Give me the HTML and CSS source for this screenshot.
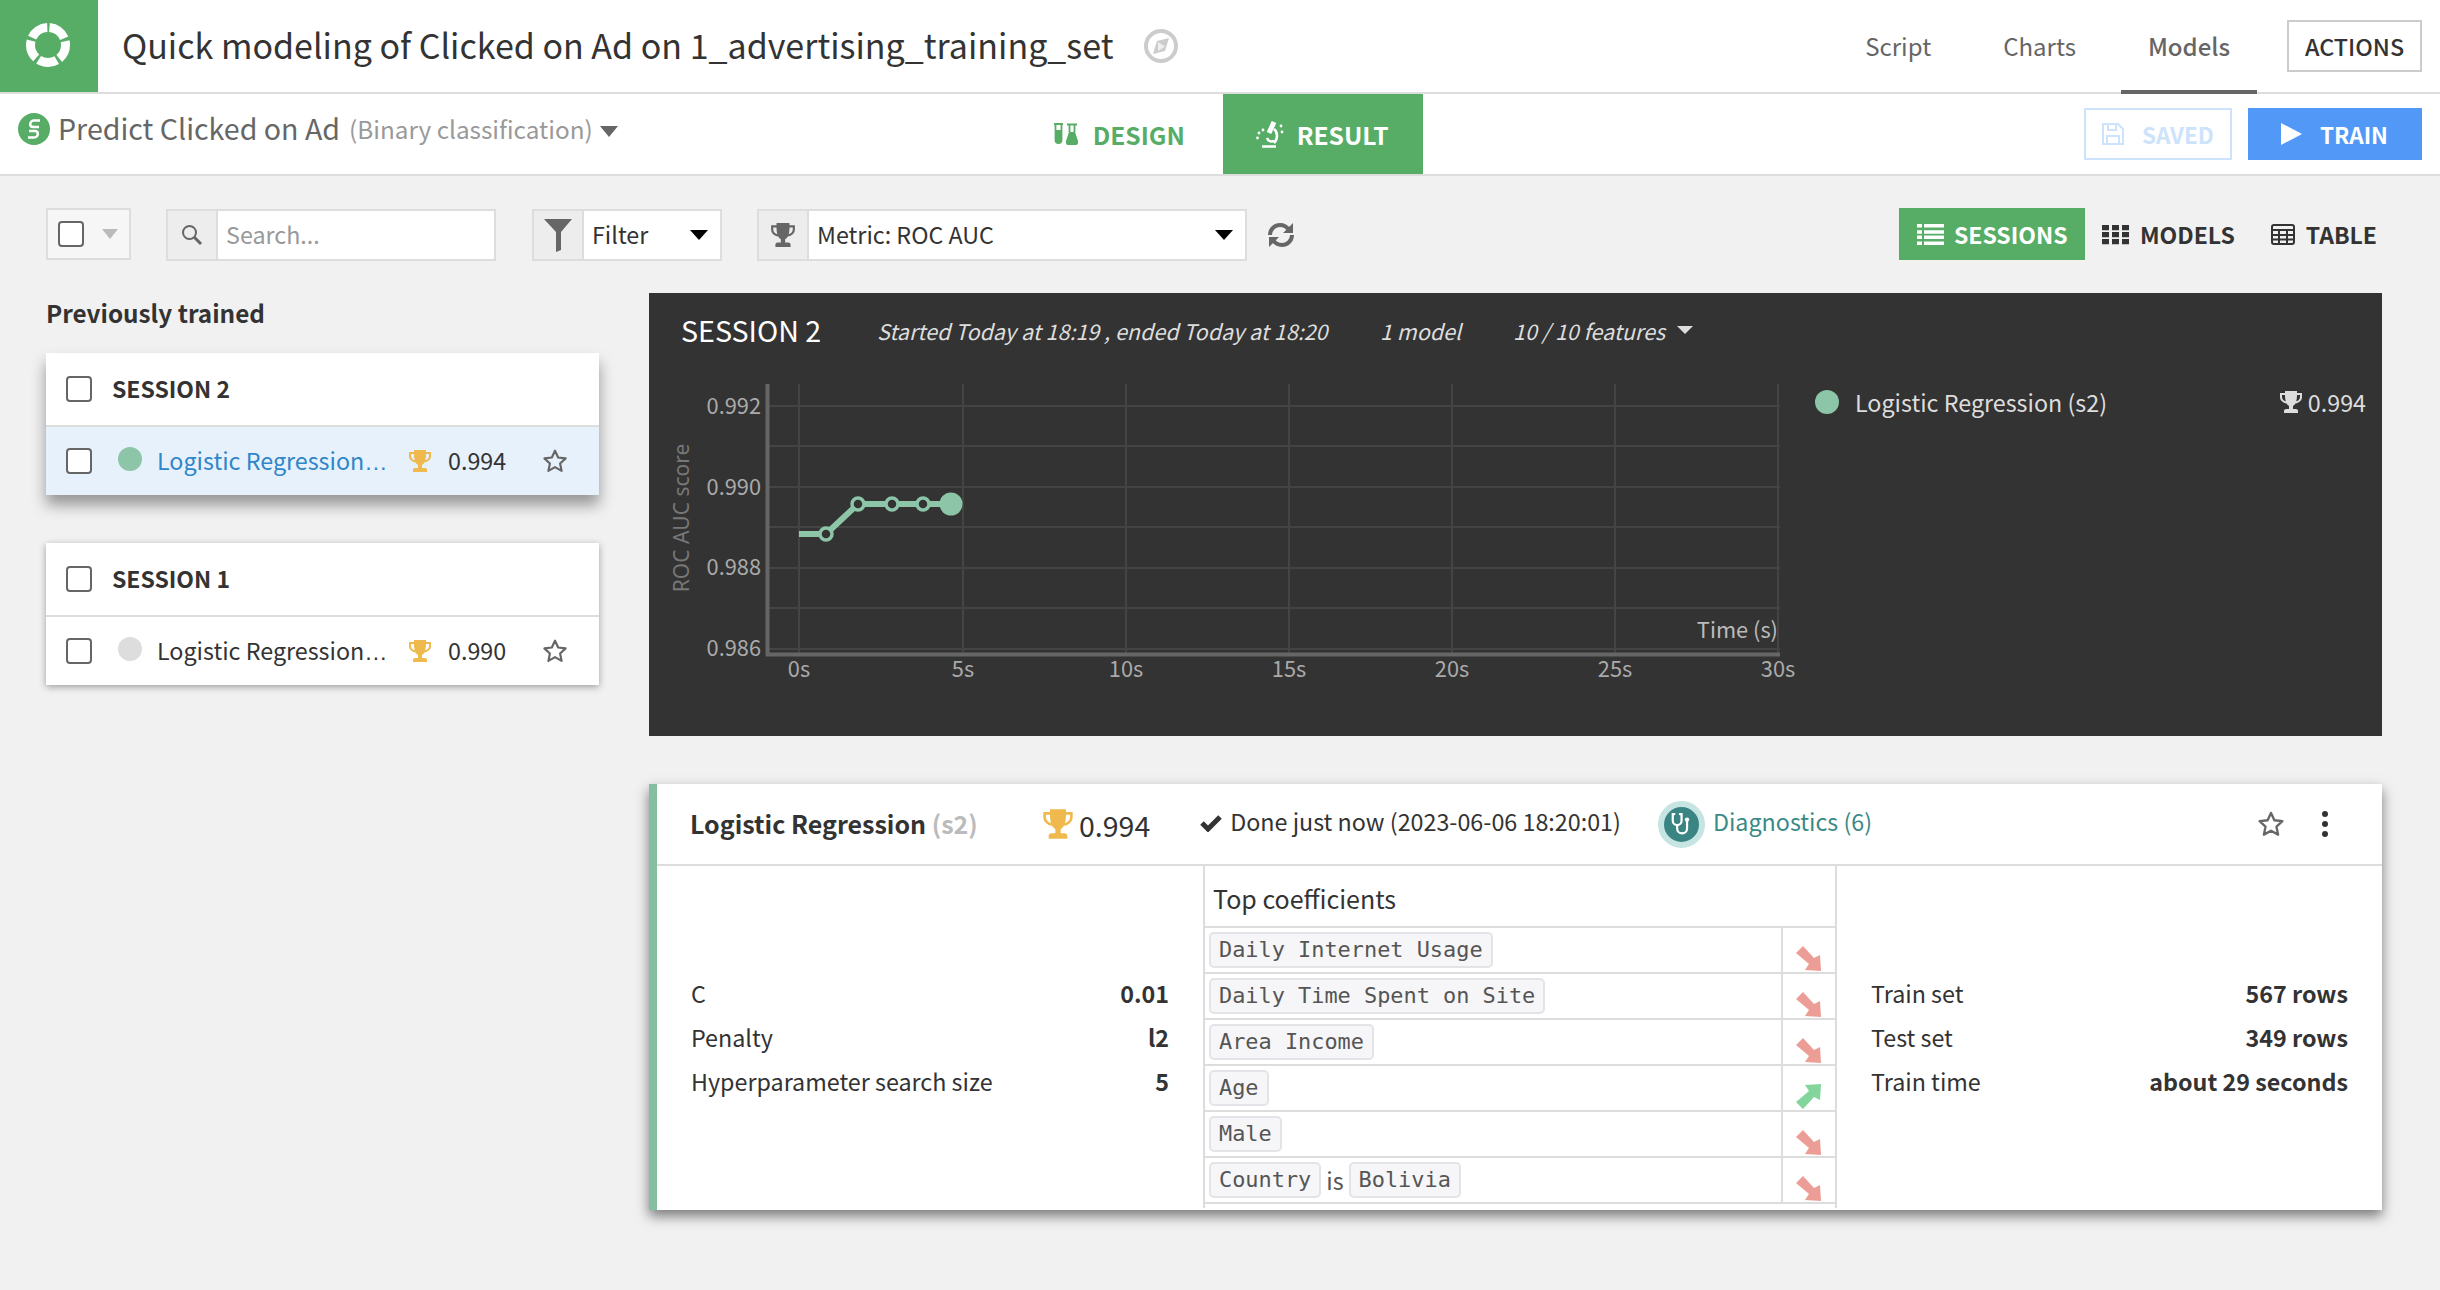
FILE: index.html
```html
<!DOCTYPE html>
<html lang="en">
<head>
    <meta charset="UTF-8">
    <title>Quick modeling</title>
    <link rel="stylesheet" href="styles.css">
</head>
<body>
    <svg class="defs" width="0" height="0">
        <symbol id="trophy" viewBox="0 0 24 24">
            <path fill="currentColor" d="M6 1h12v2h5v4c0 3.500-3 6-6.600 6.400-.7 1.300-1.600 2.100-2.400 2.500V19h3c1 0 2 .8 2 2v2H5v-2c0-1.200 1-2 2-2h3v-3.100c-.8-.4-1.700-1.200-2.400-2.500C4 13 1 10.500 1 7V3h5V1zM3 5v2c0 2 1.500 3.700 3.800 4.300C6.300 9.700 6 7.600 6 5H3zm18 0h-3c0 2.600-.3 4.700-.8 6.300C19.500 10.700 21 9 21 7V5z"/>
        </symbol>
        <symbol id="star" viewBox="0 0 24 24">
            <path fill="none" stroke="currentColor" stroke-width="2" stroke-linejoin="round" d="M12 2.500l2.900 6.300 6.900.8-5.100 4.700 1.400 6.800-6.100-3.400-6.100 3.400 1.400-6.800-5.100-4.700 6.900-.8z"/>
        </symbol>
        <symbol id="down" viewBox="0 0 25 25">
            <path fill="currentColor" d="M0 7l7-7 11 12 6-3 1 16-16-1 4-6z"/>
        </symbol>
        <symbol id="up" viewBox="0 0 25 25">
            <path fill="currentColor" d="M0 18l7 7 11-12 6 3 1-16-16 1 4 6z"/>
        </symbol>
    </svg>

    <header class="topbar">
        <div class="logo">
            <svg width="48" height="48" viewBox="0 0 48 48"><circle cx="24" cy="24" r="17.500" fill="none" stroke="#fff" stroke-width="9" stroke-dasharray="19 3" stroke-dashoffset="-1.500" transform="rotate(-90 24 24)"/></svg>
        </div>
        <h1 class="page-title">Quick modeling of Clicked on Ad on 1_advertising_training_set</h1>
        <svg class="compass" width="34" height="34" viewBox="0 0 34 34"><circle cx="17" cy="17" r="15" fill="none" stroke="#ccc" stroke-width="4"/><path fill="#ccc" d="M25 9l-4 13-12 3 4-13z"/><path fill="#eee" d="M14 13l7 4.500-7 4.500z"/></svg>
        <nav class="topnav">
            <a>Script</a>
            <a>Charts</a>
            <a class="active">Models</a>
        </nav>
        <button class="actions-btn">ACTIONS</button>
    </header>

    <div class="subbar">
        <svg class="task-icon" width="32" height="32" viewBox="0 0 32 32"><circle cx="16" cy="16" r="16" fill="#58ad66"/><path fill="none" stroke="#fff" stroke-width="2.500" d="M22 7.500h-6a3.800 3.800 0 0 0-3.800 3.800c0 1.800 1.300 2.700 3 2.700H21M10 24.500h6a3.800 3.800 0 0 0 3.800-3.800c0-1.800-1.300-2.700-3-2.700H11"/></svg>
        <div class="task-title">Predict Clicked on Ad</div>
        <div class="task-kind">(Binary classification)</div>
        <span class="caret task-caret"></span>
        <div class="mode-tabs">
            <a class="mode-tab">
                <svg width="24" height="22" viewBox="0 0 24 22"><path fill="none" stroke="currentColor" stroke-width="1.800" d="M0 1h9M1.500 1v16a3 3 0 0 0 6 0V1M13 1.500h10M15.500 1.500V9M20.500 1.500V9"/><path fill="currentColor" d="M1.500 7h6v10a3 3 0 0 1-6 0zM15 9h6l3 9c.6 2-.4 4-2 4h-8c-1.600 0-2.600-2-2-4z"/></svg>
                DESIGN
            </a>
            <a class="mode-tab active">
                <svg width="28" height="27" viewBox="0 0 28 27"><path fill="none" stroke="#fff" stroke-width="5" d="M18 1l-5 11"/><path fill="none" stroke="#fff" stroke-width="2.500" d="M18 8c4 3 4 10 0 14M6 25.500h14M11 17c1 3 4 4 7 3"/><circle cx="3" cy="12" r="1.400" fill="#fff"/><circle cx="7" cy="9" r="1.400" fill="#fff"/><circle cx="1.500" cy="17" r="1.400" fill="#fff"/><circle cx="25" cy="5" r="1.400" fill="#fff"/><circle cx="26" cy="11" r="1.400" fill="#fff"/></svg>
                RESULT
            </a>
        </div>
        <div class="subbar-actions">
            <button class="saved-btn">
                <svg width="22" height="22" viewBox="0 0 22 22"><path fill="none" stroke="currentColor" stroke-width="2" d="M1 1h15l5 5v15H1zM6 1v6h8V1M5 21v-8h12v8"/></svg>
                SAVED
            </button>
            <button class="train-btn">
                <svg width="21" height="22" viewBox="0 0 21 22"><path fill="#fff" d="M0 0l21 11L0 22z"/></svg>
                TRAIN
            </button>
        </div>
    </div>

    <div class="toolbar">
        <div class="select-all"><span class="checkbox small"></span><span class="caret pale"></span></div>
        <div class="field search-field">
            <span class="addon"><svg width="22" height="22" viewBox="0 0 22 22"><circle cx="8.500" cy="8.500" r="6.500" fill="none" stroke="#666" stroke-width="2"/><path stroke="#666" stroke-width="3" d="M13 13l7 7"/></svg></span>
            <span class="placeholder">Search...</span>
        </div>
        <div class="field filter-field">
            <span class="addon"><svg width="30" height="34" viewBox="0 0 30 34"><path fill="#666" d="M1 1h28L18 14v18l-5 2V14z"/></svg></span>
            <span class="field-value">Filter</span>
            <span class="caret"></span>
        </div>
        <div class="field metric-field">
            <span class="addon"><svg class="icon-grey" width="26" height="26"><use href="#trophy"/></svg></span>
            <span class="field-value">Metric: ROC AUC</span>
            <span class="caret"></span>
        </div>
        <svg class="refresh" width="28" height="26" viewBox="0 0 28 26"><path fill="none" stroke="#666" stroke-width="4" d="M3 13c0-6 5-10 10-10 4 0 7 2 9 5M25 13c0 6-5 10-10 10-4 0-7-2-9-5"/><path fill="#666" d="M26 1v10H16zM2 25V15h10z"/></svg>
        <div class="view-tabs">
            <a class="view-tab active">
                <svg width="27" height="21" viewBox="0 0 27 24" preserveAspectRatio="none"><path fill="#fff" d="M0 0h5v4H0zM7 0h20v4H7zM0 7h5v4H0zM7 7h20v4H7zM0 13h5v4H0zM7 13h20v4H7zM0 20h5v4H0zM7 20h20v4H7z"/></svg>
                SESSIONS
            </a>
            <a class="view-tab">
                <svg width="27" height="21" viewBox="0 0 27 24" preserveAspectRatio="none"><path fill="#333" d="M0 1h7v6H0zM10 1h7v6h-7zM20 1h7v6h-7zM0 9h7v6H0zM10 9h7v6h-7zM20 9h7v6h-7zM0 17h7v6H0zM10 17h7v6h-7zM20 17h7v6h-7z"/></svg>
                MODELS
            </a>
            <a class="view-tab">
                <svg width="24" height="21" viewBox="0 0 24 21"><rect x="1" y="1" width="22" height="19" rx="2" fill="none" stroke="#333" stroke-width="2"/><path stroke="#333" stroke-width="2" d="M1 6h22M1 11h22M1 15.500h22M8 6v14M16 6v14"/></svg>
                TABLE
            </a>
        </div>
    </div>

    <div class="content">
        <aside class="sidebar">
            <h2 class="side-title">Previously trained</h2>
            <section class="session-card selected">
                <div class="session-head"><span class="checkbox"></span><span class="session-name">SESSION 2</span></div>
                <div class="session-row">
                    <span class="checkbox"></span>
                    <span class="dot green"></span>
                    <span class="model-name">Logistic Regression<span class="ell">…</span></span>
                    <svg class="icon-gold" width="24" height="24"><use href="#trophy"/></svg>
                    <span class="score">0.994</span>
                    <svg class="icon-star" width="26" height="26"><use href="#star"/></svg>
                </div>
            </section>
            <section class="session-card">
                <div class="session-head"><span class="checkbox"></span><span class="session-name">SESSION 1</span></div>
                <div class="session-row">
                    <span class="checkbox"></span>
                    <span class="dot grey"></span>
                    <span class="model-name">Logistic Regression<span class="ell">…</span></span>
                    <svg class="icon-gold" width="24" height="24"><use href="#trophy"/></svg>
                    <span class="score">0.990</span>
                    <svg class="icon-star" width="26" height="26"><use href="#star"/></svg>
                </div>
            </section>
        </aside>

        <main class="results">
            <section class="chart-panel">
                <div class="chart-head">
                    <span class="chart-title">SESSION 2</span>
                    <em class="chart-times">Started Today at 18:19 , ended Today at 18:20</em>
                    <em class="chart-count">1 model</em>
                    <em class="chart-features">10 / 10 features</em>
                    <span class="caret light"></span>
                </div>
                <div class="chart-body">
                    <svg class="chart" width="1180" height="320" viewBox="649 380 1180 320">
                        <g class="grid">
                            <path d="M769 406H1780M769 446H1780M769 487H1780M769 527H1780M769 568H1780M769 608H1780M769 649H1780"/>
                            <path d="M799 384V656M963 384V656M1126 384V656M1289 384V656M1452 384V656M1615 384V656M1778 384V656"/>
                        </g>
                        <path class="axis" d="M767.500 384V654.500H1780" />
                        <g class="tick-y">
                            <text x="761" y="414">0.992</text>
                            <text x="761" y="495">0.990</text>
                            <text x="761" y="575">0.988</text>
                            <text x="761" y="656">0.986</text>
                        </g>
                        <g class="tick-x">
                            <text x="799" y="677">0s</text>
                            <text x="963" y="677">5s</text>
                            <text x="1126" y="677">10s</text>
                            <text x="1289" y="677">15s</text>
                            <text x="1452" y="677">20s</text>
                            <text x="1615" y="677">25s</text>
                            <text x="1778" y="677">30s</text>
                        </g>
                        <text class="time-label" x="1778" y="638">Time (s)</text>
                        <text class="y-label" transform="translate(689 518) rotate(-90)">ROC AUC score</text>
                        <path class="series" d="M799 534H826L858 504H951"/>
                        <circle class="pt" cx="826" cy="534" r="6"/>
                        <circle class="pt" cx="858" cy="504" r="6"/>
                        <circle class="pt" cx="892" cy="504" r="6"/>
                        <circle class="pt" cx="923" cy="504" r="6"/>
                        <circle class="pt-end" cx="951" cy="504" r="11.500"/>
                    </svg>
                    <div class="legend">
                        <span class="dot green"></span>
                        <span class="legend-name">Logistic Regression (s2)</span>
                        <svg class="icon-light" width="24" height="24"><use href="#trophy"/></svg>
                        <span class="legend-score">0.994</span>
                    </div>
                </div>
            </section>

            <section class="model-card">
                <div class="model-head">
                    <span class="model-title">Logistic Regression <span class="muted">(s2)</span></span>
                    <svg class="icon-gold head-trophy" width="32" height="32"><use href="#trophy"/></svg>
                    <span class="head-score">0.994</span>
                    <svg class="head-check" width="22" height="18" viewBox="0 0 22 18"><path fill="none" stroke="#333" stroke-width="5" d="M2 9l6 6L20 3"/></svg>
                    <span class="head-status">Done just now (2023-06-06 18:20:01)</span>
                    <span class="diag-icon"><svg width="22" height="22" viewBox="0 0 20 20"><path fill="none" stroke="#fff" stroke-width="2" stroke-linecap="round" d="M4 1H2.500v6a4 4 0 0 0 8 0V1H9M6.500 11v3a4.500 4.500 0 0 0 9 0V8"/><circle cx="15.500" cy="6" r="2" fill="#fff"/></svg></span>
                    <span class="diag-text">Diagnostics (6)</span>
                    <svg class="icon-star head-star" width="28" height="28"><use href="#star"/></svg>
                    <span class="kebab"><i></i><i></i><i></i></span>
                </div>
                <div class="model-body">
                    <div class="param-col">
                        <div class="param"><span>C</span><b>0.01</b></div>
                        <div class="param"><span>Penalty</span><b>l2</b></div>
                        <div class="param"><span>Hyperparameter search size</span><b>5</b></div>
                    </div>
                    <div class="coef-col">
                        <div class="coef-title">Top coefficients</div>
                        <div class="coef-row"><div class="coef-name"><code>Daily Internet Usage</code></div><div class="coef-arrow neg"><svg width="25" height="25"><use href="#down"/></svg></div></div>
                        <div class="coef-row"><div class="coef-name"><code>Daily Time Spent on Site</code></div><div class="coef-arrow neg"><svg width="25" height="25"><use href="#down"/></svg></div></div>
                        <div class="coef-row"><div class="coef-name"><code>Area Income</code></div><div class="coef-arrow neg"><svg width="25" height="25"><use href="#down"/></svg></div></div>
                        <div class="coef-row"><div class="coef-name"><code>Age</code></div><div class="coef-arrow pos"><svg width="25" height="25"><use href="#up"/></svg></div></div>
                        <div class="coef-row"><div class="coef-name"><code>Male</code></div><div class="coef-arrow neg"><svg width="25" height="25"><use href="#down"/></svg></div></div>
                        <div class="coef-row"><div class="coef-name"><code>Country</code> is <code>Bolivia</code></div><div class="coef-arrow neg"><svg width="25" height="25"><use href="#down"/></svg></div></div>
                    </div>
                    <div class="param-col train-col">
                        <div class="param"><span>Train set</span><b>567 rows</b></div>
                        <div class="param"><span>Test set</span><b>349 rows</b></div>
                        <div class="param"><span>Train time</span><b>about 29 seconds</b></div>
                    </div>
                </div>
            </section>
        </main>
    </div>
</body>
</html>
```
FILE: styles.css
```css
* {
    box-sizing: border-box;
}
body {
    margin: 0;
    height: 1290px;
    overflow: hidden;
    background: #f1f1f1;
    color: #333;
    font-family: "Noto Sans CJK SC", "Source Sans Pro", "Open Sans", sans-serif;
    font-size: 23.300px;
}
button {
    font-family: inherit;
}
a {
    cursor: pointer;
}
svg {
    flex: none;
}
.defs {
    display: block;
    height: 0;
}
.caret {
    width: 0;
    height: 0;
    border-left: 9px solid transparent;
    border-right: 9px solid transparent;
    border-top: 10px solid #000;
}
.caret.pale {
    border-left-width: 8px;
    border-right-width: 8px;
    border-top-color: #bbb;
}
.caret.light {
    border-left-width: 8px;
    border-right-width: 8px;
    border-top-width: 8px;
    border-top-color: #ddd;
}
.checkbox {
    display: block;
    flex: none;
    width: 26px;
    height: 26px;
    background: #fff;
    border: 2px solid #666;
    border-radius: 4px;
}

/* top bar */
.topbar {
    display: flex;
    align-items: center;
    height: 94px;
    background: #fff;
    border-bottom: 2px solid #ddd;
}
.logo {
    display: flex;
    align-items: center;
    justify-content: center;
    width: 98px;
    height: 92px;
    padding: 0 2px 2px 0;
    background: #58ad66;
}
.page-title {
    margin: 0 0 0 24px;
    padding-bottom: 2px;
    font-size: 34px;
    font-weight: 400;
    line-height: 90px;
    color: #333;
    white-space: nowrap;
}
.compass {
    margin-left: 30px;
}
.topnav {
    display: flex;
    align-self: stretch;
    margin-left: auto;
    margin-right: 30px;
}
.topnav a {
    display: flex;
    align-items: center;
    height: 94px;
    margin-bottom: -2px;
    margin-left: 18px;
    padding: 0 27px;
    font-size: 24px;
    color: #666;
    border-bottom: 4px solid transparent;
}
.topnav a.active {
    border-bottom-color: #666;
    font-weight: 500;
}
.actions-btn {
    width: 135px;
    height: 52px;
    margin-right: 18px;
    background: #fff;
    border: 2px solid #ccc;
    color: #333;
    font-size: 23.300px;
    font-weight: 500;
}

/* second bar */
.subbar {
    display: flex;
    align-items: center;
    height: 82px;
    padding: 0 18px;
    background: #fff;
    border-bottom: 2px solid #ddd;
}
.task-icon {
    margin-top: -10px;
}
.task-title {
    margin: -14px 0 0 8px;
    font-size: 28.600px;
    color: #666;
}
.task-kind {
    margin: -12px 0 0 9px;
    font-size: 24.300px;
    color: #999;
}
.task-caret {
    margin: -6px 0 0 7px;
    border-top-color: #666;
    border-top-width: 11px;
}
.mode-tabs {
    display: flex;
    margin-left: 436px;
    align-self: stretch;
}
.mode-tab {
    display: flex;
    align-items: center;
    gap: 15px;
    width: 200px;
    height: 80px;
    padding-left: 33px;
    font-size: 24.600px;
    font-weight: 600;
    color: #58ad66;
}
.mode-tab:first-child {
    width: 169px;
    padding-left: 0;
}
.mode-tab.active {
    background: #58ad66;
    color: #fff;
    gap: 13px;
}
.subbar-actions {
    display: flex;
    gap: 16px;
    margin-left: auto;
}
.saved-btn,
.train-btn {
    display: flex;
    align-items: center;
    gap: 18px;
    height: 52px;
    font-size: 22.500px;
    font-weight: 600;
}
.saved-btn {
    width: 148px;
    padding: 0 16px;
    background: #fff;
    border: 2px solid #cde3fb;
    color: #cde3fb;
}
.train-btn {
    width: 174px;
    padding: 0 33px;
    background: #5299f7;
    border: 0;
    color: #fff;
}

/* toolbar */
.toolbar {
    display: flex;
    align-items: center;
    height: 52px;
    margin: 33px 18px 0 46px;
}
.select-all {
    display: flex;
    align-items: center;
    gap: 18px;
    width: 85px;
    height: 52px;
    margin-bottom: 2px;
    padding-left: 10px;
    background: #f6f6f6;
    border: 2px solid #ddd;
}
.field {
    display: flex;
    align-items: center;
    height: 52px;
    background: #fff;
    border: 2px solid #ddd;
}
.addon {
    display: flex;
    flex: none;
    align-items: center;
    justify-content: center;
    width: 50px;
    height: 100%;
    background: #ededed;
    border-right: 2px solid #ddd;
}
.search-field {
    width: 330px;
    margin-left: 35px;
}
.placeholder,
.field-value {
    padding: 0 0 2px 8px;
    line-height: 46px;
}
.placeholder {
    color: #999;
}
.filter-field {
    width: 190px;
    margin-left: 36px;
}
.metric-field {
    width: 490px;
    margin-left: 35px;
}
.field .caret {
    margin-left: auto;
    margin-right: 12px;
}
.icon-grey {
    color: #666;
}
.refresh {
    margin-left: 20px;
}
.view-tabs {
    display: flex;
    margin-left: auto;
    margin-right: 38px;
    margin-bottom: 2px;
}
.view-tab {
    display: flex;
    align-items: center;
    gap: 11px;
    height: 52px;
    padding: 0 17px;
    font-size: 23px;
    font-weight: 600;
    color: #333;
}
.view-tab.active {
    width: 186px;
    gap: 10px;
    padding: 0 0 0 18px;
    background: #58ad66;
    color: #fff;
}
.view-tab:last-child {
    padding: 0 7px 0 19px;
}

/* main area */
.content {
    display: flex;
    gap: 50px;
    margin: 32px 58px 0 46px;
}
.sidebar {
    flex: none;
    width: 553px;
}
.side-title {
    margin: 0 0 20px;
    font-size: 24.300px;
    font-weight: 600;
    line-height: 40px;
    color: #333;
}
.session-card {
    margin-bottom: 48px;
    background: #fff;
    box-shadow: 0 2px 7px rgba(0, 0, 0, 0.35);
}
.session-card.selected {
    box-shadow: 0 10px 14px rgba(0, 0, 0, 0.38);
}
.session-head {
    display: flex;
    align-items: center;
    gap: 20px;
    height: 74px;
    padding-left: 20px;
    border-bottom: 2px solid #ddd;
    font-size: 23px;
    font-weight: 600;
}
.session-name {
    margin-top: -2px;
}
.session-row {
    display: flex;
    align-items: center;
    height: 68px;
    padding-left: 20px;
}
.selected .session-row {
    background: #e7f1fb;
}
.selected .model-name {
    color: #2f86c9;
}
.dot {
    display: block;
    flex: none;
    width: 24px;
    height: 24px;
    border-radius: 50%;
}
.dot.green {
    background: #8cc5a8;
}
.dot.grey {
    background: #ddd;
}
.session-row .dot {
    margin: -4px 15px 0 26px;
}
.model-name {
    width: 233px;
    margin-top: -2px;
    white-space: nowrap;
}
.ell {
    font-family: "Liberation Sans", sans-serif;
}
.icon-gold {
    color: #f0b94d;
}
.session-row .icon-gold {
    margin-left: 18px;
}
.score {
    margin: -2px 0 0 16px;
}
.icon-star {
    color: #666;
}
.session-row .icon-star {
    margin-left: 36px;
}

/* chart panel */
.results {
    flex: 1;
    min-width: 0;
}
.chart-panel {
    height: 443px;
    background: #333;
    color: #ddd;
}
.chart-head {
    display: flex;
    align-items: center;
    height: 74px;
    padding-left: 32px;
}
.chart-head em {
    font-size: 21.500px;
    white-space: nowrap;
}
.chart-title {
    width: 196px;
    margin-top: -2px;
    font-size: 28.600px;
    color: #fff;
}
.chart-times {
    width: 503px;
}
.chart-count {
    width: 133px;
}
.chart-features {
    width: 164px;
}
.chart-body {
    display: flex;
    height: 320px;
    margin-top: 13px;
}
.chart {
    flex: none;
}
.grid path {
    fill: none;
    stroke: #444;
    stroke-width: 2;
}
.axis {
    fill: none;
    stroke: #666;
    stroke-width: 4;
}
.chart text {
    fill: #aaa;
    font-size: 21.800px;
}
.tick-y text {
    text-anchor: end;
}
.tick-x text {
    text-anchor: middle;
}
.chart .time-label {
    text-anchor: end;
    fill: #bbb;
}
.chart .y-label {
    text-anchor: middle;
    fill: #777;
    font-family: "Noto Sans", sans-serif;
    font-size: 21px;
}
.series {
    fill: none;
    stroke: #8cc5a8;
    stroke-width: 6;
}
.pt {
    fill: #333;
    stroke: #8cc5a8;
    stroke-width: 3.500;
}
.pt-end {
    fill: #8cc5a8;
}
.legend {
    display: flex;
    flex: 1;
    align-items: center;
    align-self: flex-start;
    margin-top: 5px;
    padding-right: 16px;
}
.legend .dot {
    margin-left: -14px;
}
.legend-name {
    margin-left: 16px;
}
.icon-light {
    margin-left: auto;
    color: #ddd;
}
.legend-score {
    margin-left: 5px;
}

/* model card */
.model-card {
    height: 426px;
    margin-top: 48px;
    overflow: hidden;
    background: #fff;
    border-left: 8px solid #83bfa0;
    box-shadow: 0 6px 12px rgba(0, 0, 0, 0.5);
}
.model-head {
    display: flex;
    align-items: center;
    height: 82px;
    padding-left: 33px;
    border-bottom: 2px solid #ddd;
}
.model-title {
    width: 352px;
    margin-top: -2px;
    font-size: 25px;
    font-weight: 600;
}
.muted {
    color: #bbb;
}
.head-score {
    margin-left: 5px;
    font-size: 28.500px;
}
.head-check {
    margin: -3px 0 0 50px;
}
.head-status {
    margin: -6px 0 0 8px;
}
.diag-icon {
    display: flex;
    align-items: center;
    justify-content: center;
    width: 47px;
    height: 47px;
    margin-left: 37px;
    background: #3a8583;
    border: 6px solid #c5e4e2;
    border-radius: 50%;
}
.diag-text {
    margin: -6px 0 0 8px;
    color: #3a8a86;
}
.head-star {
    margin-left: auto;
}
.kebab {
    display: flex;
    flex-direction: column;
    gap: 4px;
    margin: 0 54px 0 37px;
}
.kebab i {
    display: block;
    width: 6px;
    height: 6px;
    background: #333;
    border-radius: 50%;
}
.model-body {
    display: flex;
    height: 342px;
}
.param-col {
    display: flex;
    flex: none;
    flex-direction: column;
    justify-content: center;
    gap: 6px;
    width: 546px;
    height: 100%;
    padding: 0 34px;
}
.param {
    display: flex;
    justify-content: space-between;
    height: 38px;
    line-height: 38px;
}
.param b {
    font-weight: 600;
}
.coef-col {
    flex: none;
    width: 634px;
    border-left: 2px solid #ddd;
    border-right: 2px solid #ddd;
}
.coef-title {
    height: 62px;
    padding: 10px 0 0 8px;
    font-size: 25px;
    line-height: 44px;
    border-bottom: 2px solid #ddd;
}
.coef-row {
    display: flex;
    height: 46px;
    border-bottom: 2px solid #ddd;
}
.coef-name {
    display: flex;
    flex: 1;
    align-items: center;
    gap: 5px;
    padding-left: 4px;
    color: #555;
    border-right: 2px solid #ddd;
}
code {
    height: 36px;
    padding: 0 8px;
    background: #f6f6f8;
    border: 2px solid #e3e3e8;
    border-radius: 5px;
    font-family: "DejaVu Sans Mono", monospace;
    font-size: 21.900px;
    line-height: 31px;
    color: #555;
}
.coef-arrow {
    display: flex;
    align-items: flex-end;
    width: 52px;
    padding: 0 0 1px 13px;
}
.neg {
    color: #ec9d96;
}
.pos {
    color: #82d69c;
}
.train-col {
    flex: 1;
    width: auto;
    min-width: 0;
}
```
